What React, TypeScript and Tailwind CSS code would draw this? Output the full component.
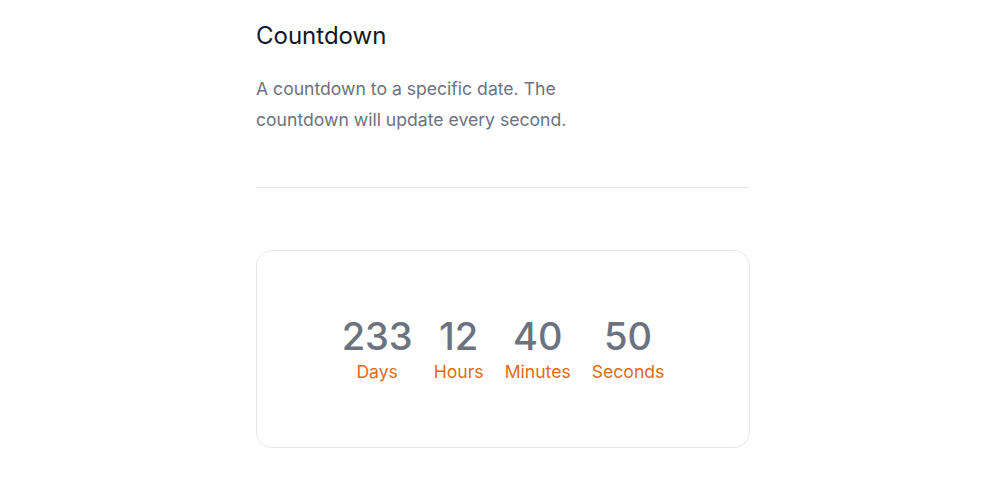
const units = [
  { value: '233', label: 'Days' },
  { value: '12', label: 'Hours' },
  { value: '40', label: 'Minutes' },
  { value: '50', label: 'Seconds' },
];

export default function App() {
  return (
    <div className="min-h-[500px] bg-white font-['Inter',sans-serif]">
      <div className="ml-[256px] w-[494px] pt-[18px]">
        <h1 className="text-2xl leading-9 text-[#111827]">Countdown</h1>
        <p className="mt-[19px] max-w-[320px] text-[17.6px] leading-[31px] text-[#6b7280]">
          A countdown to a specific date. The countdown will update every second.
        </p>
        <hr className="mt-[52px] border-[#e5e7eb]" />
        <div className="mt-[62px] flex h-[198px] items-center justify-center rounded-2xl border border-[#e5e7eb]">
          <div className="flex gap-[21px]">
            {units.map((u) => (
              <div key={u.label} className="flex flex-col items-center">
                <span className="text-[38px] font-medium leading-[44px] text-[#6b7280]">{u.value}</span>
                <span className="mt-[2px] text-[17.6px] leading-6 text-[#dd6b20]">{u.label}</span>
              </div>
            ))}
          </div>
        </div>
      </div>
    </div>
  );
}
